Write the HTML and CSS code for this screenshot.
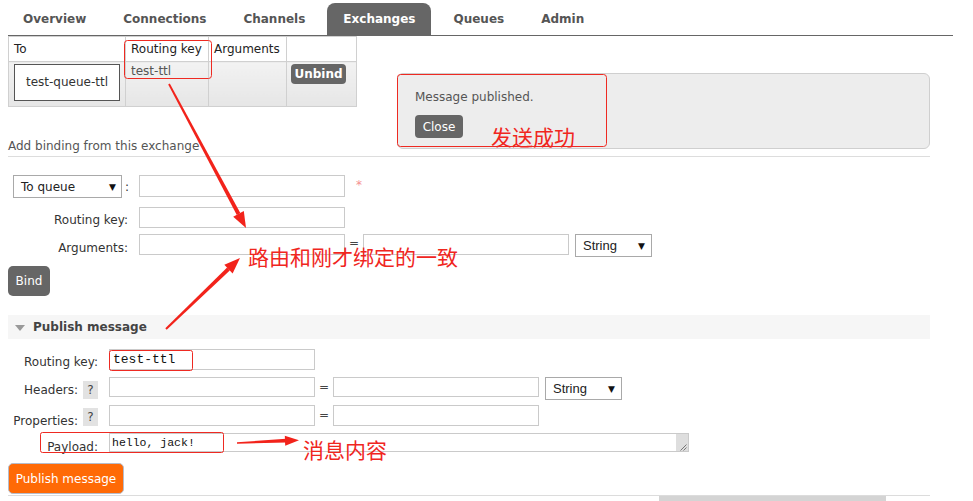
FILE: index.html
```html
<!DOCTYPE html>
<html lang="en">
<head>
<meta charset="utf-8">
<title>Exchange: test</title>
<link rel="stylesheet" href="styles.css">
</head>
<body>
<div class="page">
  <ul class="tabs">
    <li>Overview</li>
    <li>Connections</li>
    <li>Channels</li>
    <li class="active">Exchanges</li>
    <li>Queues</li>
    <li>Admin</li>
  </ul>

  <table class="bindings">
    <colgroup><col class="w-to"><col class="w-rk"><col class="w-args"><col class="w-act"></colgroup>
    <thead>
      <tr><th>To</th><th>Routing key</th><th>Arguments</th><th></th></tr>
    </thead>
    <tbody>
      <tr>
        <td><span class="queue-box">test-queue-ttl</span></td>
        <td class="rk">test-ttl</td>
        <td></td>
        <td class="act"><button class="btn btn-small">Unbind</button></td>
      </tr>
    </tbody>
  </table>

  <h3 class="sub">Add binding from this exchange</h3>

  <div class="form bind-form">
    <div class="row row-1">
      <div class="lab lab-select">
        <div class="sel sel-queue"><span>To queue</span><span class="caret">▼</span></div>
        <span class="colon">:</span>
      </div>
      <input class="txt" type="text">
      <span class="req">*</span>
    </div>
    <div class="row row-2">
      <label class="lab">Routing key:</label>
      <input class="txt" type="text">
    </div>
    <div class="row row-3">
      <label class="lab">Arguments:</label>
      <input class="txt" type="text">
      <span class="eq">=</span>
      <input class="txt" type="text">
      <div class="sel sel-type"><span>String</span><span class="caret">▼</span></div>
    </div>
    <button class="btn btn-bind">Bind</button>
  </div>

  <div class="section-head">
    <svg class="tri" width="10" height="6" viewBox="0 0 10 6"><polygon points="0,0 10,0 5,6" fill="#9a9a9a"/></svg>
    <span>Publish message</span>
  </div>

  <div class="form pub-form">
    <div class="row prow-1">
      <label class="plab">Routing key:</label>
      <input class="txt mono-rk" type="text" value="test-ttl">
    </div>
    <div class="row prow-2">
      <div class="plab"><span>Headers:</span><span class="help">?</span></div>
      <input class="txt" type="text">
      <span class="eq">=</span>
      <input class="txt" type="text">
      <div class="sel sel-type"><span>String</span><span class="caret">▼</span></div>
    </div>
    <div class="row prow-3">
      <div class="plab"><span class="plab-text">Properties:</span><span class="help">?</span></div>
      <input class="txt" type="text">
      <span class="eq">=</span>
      <input class="txt" type="text">
    </div>
    <div class="row prow-4">
      <label class="plab plab-payload">Payload:</label>
      <div class="payload">
        <textarea class="payload-text">hello, jack!</textarea>
        <div class="grip">
          <svg width="12" height="18" viewBox="0 0 12 18"><path d="M10.5 10.5 L4.5 16.5 M10.5 13.5 L7.5 16.5" stroke="#777" stroke-width="1"/></svg>
        </div>
      </div>
    </div>
    <button class="btn btn-publish">Publish message</button>
  </div>
  <div class="foot-line"></div>
  <div class="scroll-thumb"></div>

  <!-- popup -->
  <div class="popup">
    <p class="popup-msg">Message published.</p>
    <button class="btn btn-close">Close</button>
  </div>

  <!-- annotations drawn over the screenshot -->
  <svg class="annot" width="973" height="501" viewBox="0 0 973 501">
    <g fill="none" stroke="#ee2a22" stroke-width="1">
      <rect x="124.5" y="40.5" width="87" height="38" rx="3"/>
      <rect x="397.5" y="74.5" width="209" height="72" rx="3"/>
      <rect x="109.5" y="350.5" width="83" height="20" rx="2"/>
      <rect x="40.5" y="432.5" width="183" height="20" rx="2"/>
    </g>
    <g fill="#f2231b" stroke="none">
      <polygon points="168.2,84.6 169.8,83.4 240.3,213.1 236.8,215.0"/>
      <polygon points="246,228 233.2,216.7 243.8,211.1"/>
      <polygon points="165.3,328.3 166.7,329.7 229.8,270.5 227.1,267.6"/>
      <polygon points="240,258 232.6,273.4 224.3,264.7"/>
      <polygon points="237,442.3 237,443.7 286,442.5 286,438.8"/>
      <polygon points="299,440.2 285.2,445.7 284.8,435.7"/>
    </g>
  </svg>
  <span class="note note-sent">发送成功</span>
  <span class="note note-route">路由和刚才绑定的一致</span>
  <span class="note note-body">消息内容</span>
</div>
</body>
</html>
```

FILE: styles.css
```css
* { box-sizing: border-box; }

body {
  margin: 0;
  font-family: "DejaVu Sans", Verdana, sans-serif;
  font-size: 12px;
  color: #484848;
  background: #fff;
}

.page {
  position: relative;
  width: 973px;
  height: 501px;
  overflow: hidden;
  padding-left: 8px;
}

/* ---------- tabs ---------- */
.tabs {
  list-style: none;
  margin: 0;
  padding: 3px 0 0 0;
  display: flex;
  width: 945px;
  height: 36px;
  border-bottom: 1px solid #666;
}
.tabs li {
  height: 32px;
  line-height: 32px;
  padding: 0 15px;
  margin-right: 7px;
  font-weight: bold;
  color: #555;
  border-radius: 8px 8px 0 0;
}
.tabs li.active {
  background: #666;
  color: #fff;
  padding: 0 16px;
}

/* ---------- bindings table ---------- */
.bindings {
  border-collapse: collapse;
  table-layout: fixed;
  width: 349px;
}
.w-to { width: 117px; }
.w-rk { width: 83px; }
.w-args { width: 78px; }
.w-act { width: 70px; }
.bindings th,
.bindings td {
  border: 1px solid #d0d0d0;
  padding: 0 5px;
  text-align: left;
}
.bindings th {
  height: 25px;
  font-weight: normal;
  color: #222;
  vertical-align: middle;
}
.bindings td {
  height: 45px;
  vertical-align: top;
  background: linear-gradient(#f2f2f2, #e6e6e6);
}
.bindings td.rk {
  padding-top: 2px;
  line-height: 15px;
  color: #555;
}
.bindings td.act { padding: 2px 0 0 4px; }
.queue-box {
  display: block;
  margin-top: 2px;
  width: 106px;
  height: 37px;
  line-height: 35px;
  border: 1px solid #555;
  background: #fff;
  color: #333;
  text-align: center;
}

/* ---------- buttons ---------- */
.btn {
  font-family: "DejaVu Sans", Verdana, sans-serif;
  font-size: 12px;
  color: #fff;
  background: #666;
  border: none;
  border-radius: 4px;
  padding: 0;
  cursor: pointer;
}
.btn-small {
  width: 55px;
  height: 20px;
  font-weight: bold;
  border-radius: 4px;
}
.btn-close {
  width: 48px;
  height: 23px;
}
.btn-bind {
  display: block;
  width: 42px;
  height: 30px;
  margin-top: 9px;
  border-radius: 5px;
}
.btn-publish {
  display: block;
  width: 116px;
  height: 31px;
  margin-top: 11px;
  background: #ff6a06;
  border: 1px solid #b6bccb;
  border-radius: 5px;
}

/* ---------- headings ---------- */
.sub {
  margin: 32px 0 0 0;
  width: 922px;
  font-size: 12px;
  font-weight: normal;
  color: #555;
  line-height: 15px;
  padding-bottom: 2px;
  border-bottom: 1px solid #ddd;
}

.section-head {
  display: flex;
  align-items: center;
  width: 922px;
  height: 24px;
  margin-top: 19px;
  background: #f6f6f6;
  font-weight: bold;
  color: #444;
}
.section-head .tri { margin: 1px 0 0 7px; }
.section-head span { margin-left: 8px; }

/* ---------- forms ---------- */
.row {
  display: flex;
  align-items: center;
}
.txt {
  width: 206px;
  height: 21px;
  border: 1px solid #cacaca;
  background: #fff;
  padding: 0 3px;
  margin: 0;
  font-family: "Liberation Mono", monospace;
  font-size: 12px;
  color: #111;
}
.lab {
  width: 123px;
  padding: 5px 3px 0 0;
  text-align: right;
  margin-right: 8px;
  color: #333;
}
.lab-select {
  display: flex;
  align-items: center;
  padding: 0 0 0 5px;
}
.colon { margin-left: 3px; color: #333; }
.sel {
  display: flex;
  align-items: center;
  justify-content: space-between;
  height: 23px;
  border: 1px solid #a9a9a9;
  background: #fff;
  color: #222;
}
.sel .caret { font-size: 9px; color: #111; font-family: "DejaVu Sans", sans-serif; }
.sel-queue {
  width: 109px;
  padding: 0 5px 0 7px;
}
.sel-type {
  width: 77px;
  margin-left: 6px;
  padding: 0 6px 0 7px;
  font-family: "Liberation Sans", Arial, sans-serif;
  font-size: 13px;
}
.req {
  margin-left: 11px;
  margin-top: -4px;
  color: #f59090;
}
.eq {
  width: 18px;
  text-align: center;
  color: #444;
  align-self: flex-start;
  line-height: 18px;
}

.bind-form { margin-top: 18px; }
.bind-form .row-1 { height: 23px; }
.bind-form .row-1 .txt { height: 22px; margin-top: -1px; }
.bind-form .row-2 { margin-top: 9px; }
.bind-form .row-3 { margin-top: 6px; height: 23px; }
.bind-form .row-3 .txt { align-self: flex-start; }

.pub-form { margin-top: 10px; }
.plab {
  display: flex;
  align-items: center;
  justify-content: flex-end;
  width: 93px;
  padding: 5px 3px 0 0;
  margin-right: 8px;
  color: #333;
}
.help {
  display: block;
  width: 15px;
  height: 18px;
  line-height: 18px;
  margin-left: 5px;
  background: #e2e2e2;
  text-align: center;
  color: #444;
}
.prow-2 { margin-top: 7px; }
.prow-2 .txt { height: 20px; align-self: flex-start; }
.prow-2 .plab { padding-top: 4px; align-self: flex-start; }
.prow-2 .eq, .prow-3 .eq { line-height: 20px; }
.prow-3 { margin-top: 5px; }
.prow-3 .plab { padding-top: 2px; }
.prow-3 .plab-text { margin: 4px 0 -4px 0; }
.prow-4 { margin-top: 7px; align-items: flex-start; }
.plab-payload { padding-top: 7px; margin-bottom: -4px; }
.mono-rk { font-size: 13px; padding-left: 3px; }

.payload {
  display: flex;
  width: 580px;
  height: 19px;
  border: 1px solid #cacaca;
  background: #fff;
}
.payload-text {
  flex: 1;
  height: 17px;
  border: none;
  resize: none;
  outline: none;
  overflow: hidden;
  padding: 1px 2px 0 2px;
  font-family: "Liberation Mono", monospace;
  font-size: 11.5px;
  line-height: 15px;
  color: #111;
}
.grip {
  width: 12px;
  height: 17px;
  background: #dedede;
  overflow: hidden;
}

.foot-line {
  width: 922px;
  margin-top: 1px;
  border-top: 1px solid #dcdcdc;
}
.scroll-thumb {
  margin-left: 651px;
  width: 227px;
  height: 6px;
  background: #d4d4d4;
}

/* ---------- popup ---------- */
.popup {
  position: absolute;
  left: 397px;
  top: 73px;
  width: 533px;
  height: 76px;
  padding: 16px 0 0 17px;
  background: #ededed;
  border: 1px solid #cfcfcf;
  border-radius: 6px;
}
.popup-msg {
  margin: 0 0 10px 0;
  line-height: 15px;
  color: #555;
}

/* ---------- annotations ---------- */
.annot {
  position: absolute;
  left: 0;
  top: 0;
  pointer-events: none;
}
.note {
  position: absolute;
  font-family: "Noto Sans CJK SC", "Noto Sans", sans-serif;
  font-size: 21px;
  line-height: 21px;
  color: #f0261e;
  white-space: nowrap;
}
.note-sent { left: 491px; top: 126px; }
.note-route { left: 248px; top: 246px; }
.note-body { left: 303px; top: 439px; }
```
